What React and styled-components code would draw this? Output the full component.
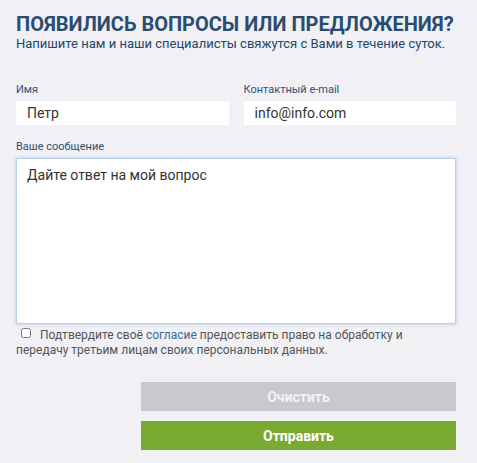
import React from 'react';
import styled, { createGlobalStyle } from 'styled-components';

const GlobalStyle = createGlobalStyle`
    html, body {
        margin: 0;
        padding: 0;
        background: #f0f0f5;
    }
    body {
        font-family: Roboto, "Liberation Sans", Arial, sans-serif;
    }
`

const Page = styled.div`
    width: 477px;
    height: 463px;
    box-sizing: border-box;
    padding: 12px 21px 0 16px;
    background: #f0f0f5;
`

const Title = styled.h2`
    margin: 0;
    font-size: 20px;
    font-weight: 700;
    line-height: 24px;
    color: #2b4c6f;
    text-transform: uppercase;
`

const Subtitle = styled.p`
    margin: 0;
    font-size: 13px;
    line-height: 16px;
    font-weight: 400;
    color: #24466b;
`

const Row = styled.div`
    display: grid;
    grid-template-columns: 1fr 1fr;
    column-gap: 15px;
    margin-top: ${p => p.top || 0}px;
`

const Field = styled.div`
    display: flex;
    flex-direction: column;
    margin-top: ${p => p.top || 0}px;
`

const Label = styled.label`
    font-size: 11px;
    line-height: 14px;
    color: #34506f;
    margin-bottom: 4px;
`

const Input = styled.input`
    box-sizing: border-box;
    height: 24px;
    border: none;
    outline: none;
    background: #fff;
    padding: 0 11px;
    font-family: inherit;
    font-size: 14px;
    color: #333;
`

const TextArea = styled.textarea`
    box-sizing: border-box;
    width: 100%;
    height: 166px;
    resize: none;
    border: 1px solid #b9d0e8;
    box-shadow: 0 0 3px rgba(100, 150, 210, 0.45);
    outline: none;
    background: #fff;
    padding: 7px 10px;
    font-family: inherit;
    font-size: 14px;
    line-height: 18px;
    color: #333;
    display: block;
`

const Consent = styled.div`
    margin-top: 4px;
    font-size: 12px;
    line-height: 15px;
    color: #555;
    input {
        margin: 0 9px 0 5px;
        width: 10px;
        height: 10px;
        vertical-align: 1px;
    }
    a {
        color: #3c6a98;
        text-decoration: none;
    }
`

const Buttons = styled.div`
    margin-top: 24px;
    margin-left: 125px;
    display: flex;
    flex-direction: column;
    gap: 10px;
`

const Button = styled.button`
    height: 29px;
    border: none;
    background: ${p => p.primary ? '#7aaa31' : '#c9c8cd'};
    color: ${p => p.primary ? '#fff' : '#f3f3f5'};
    font-family: inherit;
    font-size: 14px;
    font-weight: 700;
    cursor: pointer;
`

export default function App() {
    return (
        <Page>
            <GlobalStyle />
            <Title>Появились вопросы или предложения?</Title>
            <Subtitle>Напишите нам и наши специалисты свяжутся с Вами в течение суток.</Subtitle>

            <Row top={31}>
                <Field>
                    <Label>Имя</Label>
                    <Input defaultValue="Петр" />
                </Field>
                <Field>
                    <Label>Контактный e-mail</Label>
                    <Input defaultValue="info@info.com" />
                </Field>
            </Row>

            <Field top={15}>
                <Label>Ваше сообщение</Label>
                <TextArea defaultValue="Дайте ответ на мой вопрос" />
            </Field>

            <Consent>
                <input type="checkbox" />
                Подтвердите своё <a href="#">согласие</a> предоставить право на обработку и
                <br />
                передачу третьим лицам своих персональных данных.
            </Consent>

            <Buttons>
                <Button>Очистить</Button>
                <Button primary>Отправить</Button>
            </Buttons>
        </Page>
    )
}
